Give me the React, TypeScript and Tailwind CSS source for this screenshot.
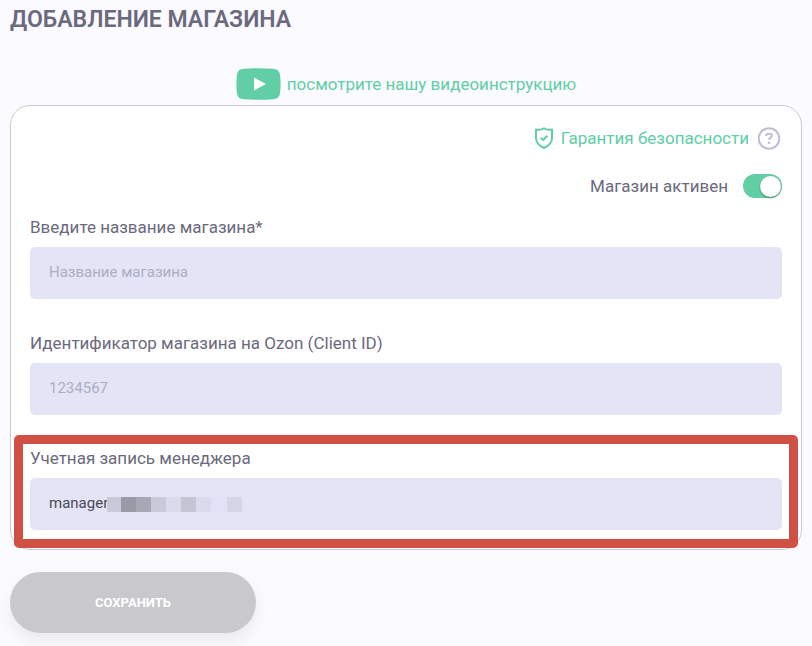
import { useState } from "react";

type FieldProps = {
  id: string;
  label: string;
  placeholder?: string;
  defaultValue?: string;
};

function Field({ id, label, placeholder, defaultValue }: FieldProps) {
  return (
    <div className="flex flex-col gap-2">
      <label htmlFor={id} className="text-[17px] leading-6 text-[#6b697d]">
        {label}
      </label>
      <input
        id={id}
        type="text"
        placeholder={placeholder}
        defaultValue={defaultValue}
        className="h-13 w-full rounded-[5px] bg-[#e3e4f6] px-[19px] pb-[2px] text-[15px] text-[#4a4a55] outline-none placeholder:text-[#adadc4]"
      />
    </div>
  );
}

function HiddenAccount() {
  return (
    <div className="absolute bottom-[18px] left-[77px] flex h-[15px]" aria-hidden="true">
      <span className="w-[14px] bg-[#cac9da]" />
      <span className="w-[15px] bg-[#9a99a6]" />
      <span className="w-[15px] bg-[#a8a7b5]" />
      <span className="w-[15px] bg-[#cac9da]" />
      <span className="w-[15px] bg-[#dbdaed]" />
      <span className="w-[15px] bg-[#c5c4d2]" />
      <span className="w-[15px] bg-[#dbdaed]" />
      <span className="w-[16px] bg-[#e2e1f5]" />
      <span className="w-[15px] bg-[#d6d5e6]" />
    </div>
  );
}

export default function App() {
  const [active, setActive] = useState(true);

  return (
    <main className="min-h-screen bg-[#fbfaff] px-[10px] pt-1 font-['Roboto','Liberation_Sans',sans-serif] text-[#6b697d]">
      <h1 className="text-[23px] leading-8 font-semibold">ДОБАВЛЕНИЕ МАГАЗИНА</h1>

      <a href="#video" className="mt-8 flex items-center justify-center gap-[6px] text-[17px] leading-8 text-[#61cea5]">
        <svg width="45" height="32" viewBox="0 0 45 32" aria-hidden="true">
          <path
            d="M8 .8C17 .1 28 .1 37 .8c4.500.4 6.600 2.200 7.100 6.700.7 6 .7 11 0 17-.5 4.500-2.600 6.400-7.100 6.800-9 .7-20 .7-29 0-4.500-.4-6.600-2.300-7.100-6.800-.7-6-.7-11 0-17C1.400 3 3.500 1.200 8 .8Z"
            fill="#61cea5"
          />
          <path d="M18 9.500v13L30 16Z" fill="#fff" />
        </svg>
        <span>посмотрите нашу видеоинструкцию</span>
      </a>

      <form onSubmit={(e) => e.preventDefault()}>
        <div className="mt-[5px] rounded-[20px] border border-[#cac7dd] bg-white px-[19px] pt-5 pb-[19px]">
          <div className="flex h-6 items-center justify-end">
            <a href="#security" className="flex items-center gap-[7px] text-[17px] leading-6 text-[#61cea5]">
              <svg width="20" height="24" viewBox="0 0 20 24" fill="none" stroke="#61cea5" strokeWidth="2" strokeLinejoin="round" aria-hidden="true">
                <path d="M10 2.200C8 3.600 5 4 2 3.600V12c0 4.500 3 7.700 8 10 5-2.300 8-5.500 8-10V3.600C15 4 12 3.600 10 2.200Z" />
                <path d="m6.600 11.700 2.500 2.300 4.400-4.300" />
              </svg>
              <span>Гарантия безопасности</span>
            </a>
            <button type="button" aria-label="Справка" className="ml-[9px]">
              <svg width="24" height="24" viewBox="0 0 24 24" fill="none" stroke="#bfbddb" strokeWidth="2" aria-hidden="true">
                <circle cx="11" cy="12.500" r="10.300" />
                <path d="M7.900 9.900C8 8.500 9.200 7.700 11 7.700s3 .8 3 2.100c0 1.800-2.900 1.800-2.900 4" />
                <circle cx="11.100" cy="16.700" r="1.300" fill="#bfbddb" stroke="none" />
              </svg>
            </button>
          </div>

          <label className="mt-6 flex h-6 cursor-pointer items-center justify-end gap-[15px] text-[17px] leading-6">
            <span>Магазин активен</span>
            <input
              type="checkbox"
              role="switch"
              checked={active}
              onChange={(e) => setActive(e.target.checked)}
              className="flex h-6 w-[39px] appearance-none items-center rounded-full bg-[#c9c9cb] px-[2px] before:block before:size-[21px] before:rounded-full before:bg-white before:shadow-[0_1px_2px_rgba(0,0,0,0.4)] checked:justify-end checked:bg-[#61cea5] checked:px-[1px]"
            />
          </label>

          <div className="mt-[17px]">
            <Field id="shop-name" label="Введите название магазина*" placeholder="Название магазина" />
          </div>
          <div className="mt-8">
            <Field id="client-id" label="Идентификатор магазина на Ozon (Client ID)" placeholder="1234567" />
          </div>
          <div className="relative mt-[31px]">
            <Field id="manager" label="Учетная запись менеджера" defaultValue="manager" />
            <HiddenAccount />
            <div className="pointer-events-none absolute -inset-x-4 -top-[11px] -bottom-[18px] rounded-[5px] border-9 border-[#d05043]" />
          </div>
        </div>

        <button
          type="submit"
          className="mt-[22px] h-[61px] w-[246px] rounded-full bg-[#c9c9cb] text-[13px] font-bold text-white shadow-[0_8px_16px_rgba(0,0,0,0.07)]"
        >
          СОХРАНИТЬ
        </button>
      </form>
    </main>
  );
}
